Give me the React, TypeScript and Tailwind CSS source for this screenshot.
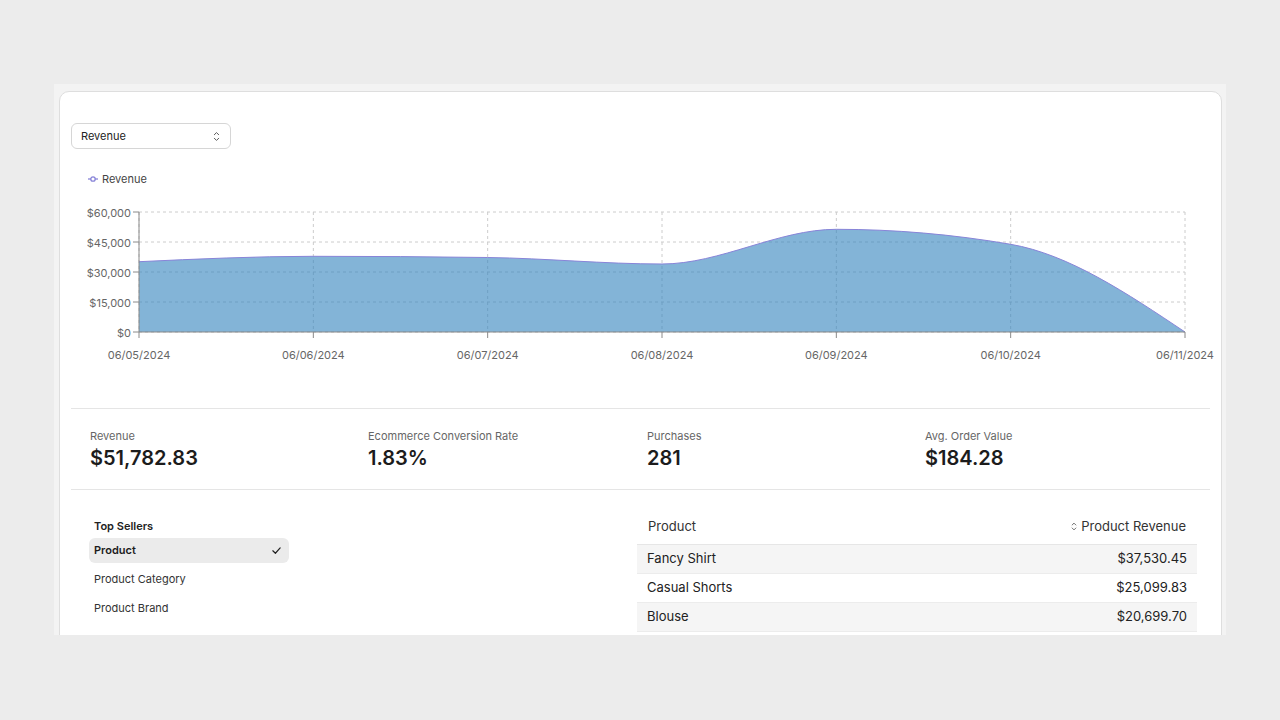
import React from "react";

const XS = [139, 313.33, 487.67, 662, 836.33, 1010.67, 1185];
const VALUES = [35150, 37850, 37250, 34000, 51350, 43850, 0];
const DATES = ["06/05/2024", "06/06/2024", "06/07/2024", "06/08/2024", "06/09/2024", "06/10/2024", "06/11/2024"];
const YTICKS = [
  { y: 212, l: "$60,000" },
  { y: 242, l: "$45,000" },
  { y: 272, l: "$30,000" },
  { y: 302, l: "$15,000" },
  { y: 332, l: "$0" },
];

function sign(x: number) {
  return x < 0 ? -1 : 1;
}

function monotonePath(xs: number[], ys: number[]) {
  const n = xs.length;
  const t: number[] = new Array(n).fill(0);
  for (let i = 1; i < n - 1; i++) {
    const h0 = xs[i] - xs[i - 1];
    const h1 = xs[i + 1] - xs[i];
    const s0 = (ys[i] - ys[i - 1]) / h0;
    const s1 = (ys[i + 1] - ys[i]) / h1;
    const p = (s0 * h1 + s1 * h0) / (h0 + h1);
    t[i] = (sign(s0) + sign(s1)) * Math.min(Math.abs(s0), Math.abs(s1), 0.5 * Math.abs(p)) || 0;
  }
  {
    const h = xs[1] - xs[0];
    t[0] = (3 * (ys[1] - ys[0]) / h - t[1]) / 2;
    const h2 = xs[n - 1] - xs[n - 2];
    t[n - 1] = (3 * (ys[n - 1] - ys[n - 2]) / h2 - t[n - 2]) / 2;
  }
  let d = `M${xs[0]},${ys[0]}`;
  for (let i = 0; i < n - 1; i++) {
    const dx = (xs[i + 1] - xs[i]) / 3;
    d += ` C${xs[i] + dx},${ys[i] + dx * t[i]} ${xs[i + 1] - dx},${ys[i + 1] - dx * t[i + 1]} ${xs[i + 1]},${ys[i + 1]}`;
  }
  return d;
}

function Chart() {
  const ys = VALUES.map((v) => 332 - (v / 60000) * 120);
  const line = monotonePath(XS, ys);
  const area = `${line} L1185,332 L139,332 Z`;
  return (
    <svg width={1139} height={190} viewBox="71 186 1139 190" className="block overflow-visible">
      <g stroke="#cccccc" strokeDasharray="3 3" strokeWidth={1} fill="none">
        {[212, 242, 272, 302, 332].map((y) => (
          <line key={y} x1={139} x2={1185} y1={y} y2={y} />
        ))}
        {XS.map((x) => (
          <line key={x} x1={x} x2={x} y1={212} y2={332} />
        ))}
      </g>
      <path d={area} fill="#3182bd" fillOpacity={0.6} />
      <path d={line} fill="none" stroke="#8884d8" strokeWidth={1} />
      <g stroke="#8a8a8a" strokeWidth={1}>
        <line x1={139} x2={139} y1={212} y2={332} />
        <line x1={139} x2={1185} y1={332} y2={332} />
        {YTICKS.map((t) => (
          <line key={t.y} x1={133} x2={139} y1={t.y} y2={t.y} />
        ))}
        {XS.map((x) => (
          <line key={x} x1={x} x2={x} y1={332} y2={338} />
        ))}
      </g>
      <g fill="#666666" fontSize={11} fontFamily="Inter, 'Liberation Sans', sans-serif">
        {YTICKS.map((t) => (
          <text key={t.y} x={131} y={t.y + 4.5} textAnchor="end">
            {t.l}
          </text>
        ))}
        {XS.map((x, i) => (
          <text key={x} x={x} y={358.5} textAnchor="middle">
            {DATES[i]}
          </text>
        ))}
      </g>
    </svg>
  );
}

function UpDown({ className }: { className?: string }) {
  return (
    <svg viewBox="0 0 8 12" className={className} fill="none" stroke="currentColor" strokeWidth={1.1} strokeLinecap="round" strokeLinejoin="round">
      <path d="M1.5 4 L4 1.5 L6.5 4" />
      <path d="M1.5 8 L4 10.5 L6.5 8" />
    </svg>
  );
}

const stats = [
  { l: "Revenue", v: "$51,782.83" },
  { l: "Ecommerce Conversion Rate", v: "1.83%" },
  { l: "Purchases", v: "281" },
  { l: "Avg. Order Value", v: "$184.28" },
];

const rows = [
  { p: "Fancy Shirt", r: "$37,530.45" },
  { p: "Casual Shorts", r: "$25,099.83" },
  { p: "Blouse", r: "$20,699.70" },
];

export default function App() {
  return (
    <div
      className="w-[1280px] h-[720px] bg-[#ececec] pt-[84px] pl-[54px]"
      style={{ fontFamily: "Inter, 'Liberation Sans', sans-serif" }}
    >
      <div className="w-[1172px] h-[551px] bg-[#f3f3f3] overflow-hidden pt-[7px] pl-[5px]">
        <div className="w-[1163px] h-[600px] bg-white border border-[#dedede] rounded-[10px] px-[11px]">
          <div className="h-[31px]" />
          <div className="w-[160px] h-[26px] border border-[#d6d6d6] rounded-[6px] flex items-center justify-between pl-[9px] pr-[10px]">
            <span className="text-[11px] text-[#222]">Revenue</span>
            <UpDown className="w-[7px] h-[11px] text-[#555]" />
          </div>
          <div className="mt-[23px] h-[14px] flex items-center pl-[17px]">
            <svg width="10" height="6" viewBox="0 0 10 6" className="mr-[4px]">
              <line x1="0" x2="10" y1="3" y2="3" stroke="#8884d8" strokeWidth="1.3" />
              <circle cx="5" cy="3" r="2.2" fill="white" stroke="#8884d8" strokeWidth="1.3" />
            </svg>
            <span className="text-[11px] text-[#444]">Revenue</span>
          </div>
          <Chart />
          <div className="h-[32px]" />
          <div className="border-t border-[#e5e5e5] pt-[20px] pb-[19px] pl-[19px] grid grid-cols-[278px_279px_278px_1fr]">
            {stats.map((s) => (
              <div key={s.l} className="flex flex-col">
                <span className="text-[11px] leading-[14px] text-[#666]">{s.l}</span>
                <span className="mt-[3px] text-[20px] leading-[24px] font-semibold text-[#1c1c1c]">{s.v}</span>
              </div>
            ))}
          </div>
          <div className="border-t border-[#e5e5e5] flex">
            <div className="w-[566px] pl-[18px] pt-[29px]">
              <div className="pl-[5px] h-[14px] text-[11px] leading-[14px] font-semibold text-[#222]">Top Sellers</div>
              <div className="mt-[5px] flex flex-col gap-[4px] w-[200px]">
                <div className="h-[25px] rounded-[6px] bg-[#ebebeb] flex items-center justify-between pl-[5px] pr-[7px]">
                  <span className="text-[11px] font-semibold text-[#1c1c1c]">Product</span>
                  <svg viewBox="0 0 12 12" className="w-[11px] h-[11px]" fill="none" stroke="#222" strokeWidth={1.3} strokeLinecap="round" strokeLinejoin="round">
                    <path d="M2 6.3 L4.8 9 L10 3.2" />
                  </svg>
                </div>
                <div className="h-[25px] flex items-center pl-[5px]">
                  <span className="text-[11px] text-[#333]">Product Category</span>
                </div>
                <div className="h-[25px] flex items-center pl-[5px]">
                  <span className="text-[11px] text-[#333]">Product Brand</span>
                </div>
              </div>
            </div>
            <div className="w-[560px] pt-[19px]">
              <div className="h-[36px] border-b border-[#e6e6e6] flex items-center justify-between pl-[11px] pr-[11px]">
                <span className="text-[13px] text-[#333]">Product</span>
                <span className="flex items-center gap-[4px] text-[13px] text-[#333]">
                  <UpDown className="w-[6px] h-[9px] text-[#555]" />
                  Product Revenue
                </span>
              </div>
              {rows.map((r, i) => (
                <div
                  key={r.p}
                  className={`h-[29px] border-b border-[#ececec] flex items-center justify-between pl-[10px] pr-[10px] ${
                    i % 2 === 0 ? "bg-[#f5f5f5]" : "bg-white"
                  }`}
                >
                  <span className="text-[13px] text-[#222]">{r.p}</span>
                  <span className="text-[13px] text-[#222]">{r.r}</span>
                </div>
              ))}
            </div>
          </div>
        </div>
      </div>
    </div>
  );
}
